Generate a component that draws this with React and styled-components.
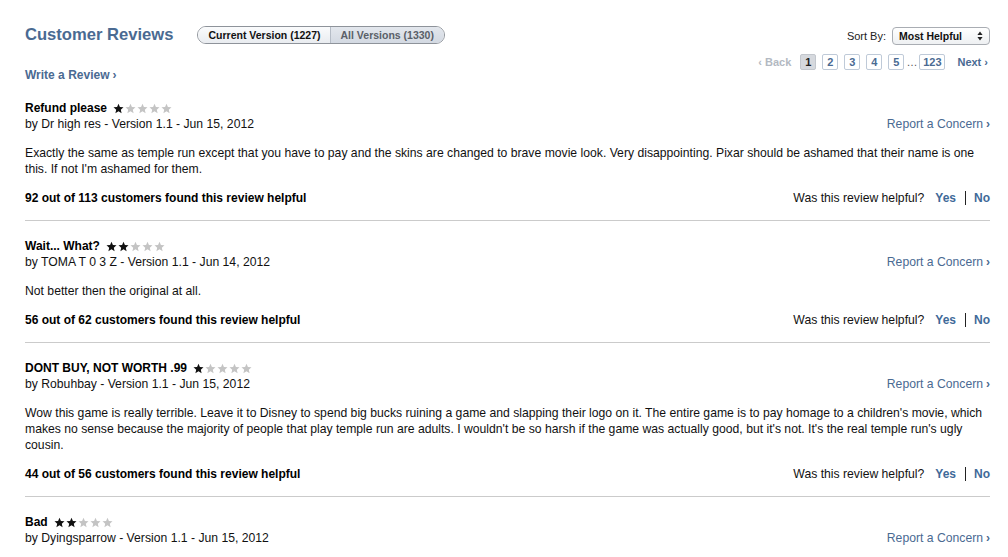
import React from "react";
import styled, { createGlobalStyle } from "styled-components";

const Global = createGlobalStyle`
  html, body { margin: 0; padding: 0; background: #fff; }
  body { font-family: "Liberation Sans", Arial, Helvetica, sans-serif; color: #000; font-size: 12px; }
`;

const Page = styled.div`
  padding: 24px 18px 0 25px;
  width: 965px;
`;

const Header = styled.div`
  display: flex;
  justify-content: space-between;
  align-items: flex-start;
`;

const LeftCol = styled.div`
  display: flex;
  flex-direction: column;
`;

const TitleRow = styled.div`
  display: flex;
  align-items: center;
  gap: 24px;
`;

const Title = styled.h1`
  margin: 0;
  font-size: 16.6px;
  line-height: 22px;
  font-weight: bold;
  color: #4a6a92;
`;

const Toggle = styled.div`
  display: flex;
  height: 16px;
  border: 1px solid #8e939a;
  border-radius: 9px;
  overflow: hidden;
`;

const Seg = styled.div`
  display: flex;
  align-items: center;
  padding-left: 10px;
  padding-right: ${(p) => (p.$first ? "9px" : "10px")};
  font-size: 10.5px;
  font-weight: bold;
  color: ${(p) => (p.$active ? "#111" : "#5a5f68")};
  background: ${(p) =>
    p.$active
      ? "linear-gradient(#fafbfc, #e9ecf0)"
      : "linear-gradient(#e3e7ed, #d3d9e2)"};
  border-left: ${(p) => (p.$first ? "none" : "1px solid #b5bcc6")};
  white-space: nowrap;
`;

const WriteLink = styled.a`
  margin-top: 21px;
  font-size: 12px;
  line-height: 16px;
  font-weight: bold;
  color: #4a6a92;
  text-decoration: none;
`;

const Chev = styled.span`
  font-weight: bold;
  font-size: 12px;
  margin-left: 3px;
`;

const RightCol = styled.div`
  display: flex;
  flex-direction: column;
  align-items: flex-end;
  padding-top: 3px;
`;

const SortRow = styled.div`
  display: flex;
  align-items: center;
  gap: 6px;
  font-size: 11px;
  color: #222;
`;

const Select = styled.div`
  width: 96px;
  height: 16px;
  box-sizing: content-box;
  border: 1px solid #a9adb3;
  border-radius: 4px;
  background: linear-gradient(#ffffff, #eef0f2);
  display: flex;
  align-items: center;
  justify-content: space-between;
  font-size: 10.5px;
  font-weight: bold;
  color: #111;
`;

const SelectText = styled.span`
  padding-left: 6px;
`;

const Arrows = styled.svg`
  margin-right: 6px;
`;

const Pager = styled.div`
  margin-top: 9px;
  display: flex;
  align-items: center;
  height: 16px;
  font-size: 11px;
  font-weight: bold;
`;

const PageNav = styled.span`
  color: ${(p) => (p.$disabled ? "#b3b9c2" : "#4a6a92")};
  margin: ${(p) => (p.$next ? "0 2px 0 12px" : "0 9px 0 0")};
`;

const PageBox = styled.span`
  display: inline-flex;
  align-items: center;
  justify-content: center;
  min-width: ${(p) => (p.$wide ? "24px" : "14px")};
  height: 14px;
  border: 1px solid ${(p) => (p.$active ? "#c3c7cd" : "#bfcad8")};
  border-radius: 2px;
  background: ${(p) => (p.$active ? "#d6d9de" : "#fff")};
  color: ${(p) => (p.$active ? "#222" : "#4a6a92")};
  margin-right: ${(p) => (p.$tight ? "0" : "6px")};
  font-size: 11px;
  line-height: 14px;
`;

const Ellipsis = styled.span`
  color: #555;
  font-weight: normal;
  margin: 0 2px 0 -1px;
`;

const ReviewList = styled.div``;

const ReviewItem = styled.div`
  padding: 17px 0 13px;
  border-bottom: 1px solid #cbcbcb;
`;

const ReviewTitle = styled.div`
  display: flex;
  align-items: center;
  gap: 6px;
  font-size: 12px;
  line-height: 16px;
  font-weight: bold;
`;

const Stars = styled.span`
  display: inline-flex;
  gap: 1px;
`;

const MetaRow = styled.div`
  display: flex;
  justify-content: space-between;
  align-items: center;
  font-size: 12.2px;
  line-height: 16px;
  color: #111;
`;

const Report = styled.a`
  color: #4a6a92;
  text-decoration: none;
`;

const Body = styled.p`
  margin: 13px 0 0;
  font-size: 12.2px;
  line-height: 16px;
  color: #111;
`;

const HelpRow = styled.div`
  margin-top: 12px;
  display: flex;
  justify-content: space-between;
  align-items: center;
  line-height: 18px;
  font-size: 12px;
`;

const HelpCount = styled.span`
  font-weight: bold;
`;

const Vote = styled.div`
  display: flex;
  align-items: center;
  color: #111;
  font-size: 12.2px;
`;

const VoteLink = styled.a`
  font-weight: bold;
  font-size: 12px;
  color: #3f6a99;
  text-decoration: none;
  margin-left: ${(p) => (p.$first ? "11px" : "0")};
`;

const VoteSep = styled.span`
  width: 1px;
  height: 14px;
  background: #222;
  margin: 0 8px 0 9px;
`;

const Star = ({ filled }) => (
  <svg width="11" height="11" viewBox="0 0 24 24">
    <path
      d="M12 1.5l3.1 7.2 7.8.7-5.9 5.1 1.8 7.6L12 18l-6.8 4.1 1.8-7.6-5.9-5.1 7.8-.7z"
      fill={filled ? "#111" : "#c4c4c4"}
    />
  </svg>
);

const Rating = ({ value }) => (
  <Stars>
    {[0, 1, 2, 3, 4].map((i) => (
      <Star key={i} filled={i < value} />
    ))}
  </Stars>
);

const reviews = [
  {
    title: "Refund please",
    rating: 1,
    meta: "by Dr high res - Version 1.1 - Jun 15, 2012",
    body:
      "Exactly the same as temple run except that you have to pay and the skins are changed to brave movie look. Very disappointing. Pixar should be ashamed that their name is one this. If not I'm ashamed for them.",
    helpful: "92 out of 113 customers found this review helpful",
  },
  {
    title: "Wait... What?",
    rating: 2,
    meta: "by TOMA T 0 3 Z - Version 1.1 - Jun 14, 2012",
    body: "Not better then the original at all.",
    helpful: "56 out of 62 customers found this review helpful",
  },
  {
    title: "DONT BUY, NOT WORTH .99",
    rating: 1,
    meta: "by Robuhbay - Version 1.1 - Jun 15, 2012",
    body:
      "Wow this game is really terrible. Leave it to Disney to spend big bucks ruining a game and slapping their logo on it. The entire game is to pay homage to a children's movie, which makes no sense because the majority of people that play temple run are adults. I wouldn't be so harsh if the game was actually good, but it's not. It's the real temple run's ugly cousin.",
    helpful: "44 out of 56 customers found this review helpful",
  },
  {
    title: "Bad",
    rating: 2,
    meta: "by Dyingsparrow - Version 1.1 - Jun 15, 2012",
    body: "Not worth the money. Same game as temple run with different graphics.",
    helpful: "40 out of 48 customers found this review helpful",
  },
];

export default function App() {
  return (
    <>
      <Global />
      <Page>
        <Header>
          <LeftCol>
            <TitleRow>
              <Title>Customer Reviews</Title>
              <Toggle>
                <Seg $first $active>Current Version (1227)</Seg>
                <Seg>All Versions (1330)</Seg>
              </Toggle>
            </TitleRow>
            <WriteLink href="#">
              Write a Review<Chev>›</Chev>
            </WriteLink>
          </LeftCol>
          <RightCol>
            <SortRow>
              <span>Sort By:</span>
              <Select>
                <SelectText>Most Helpful</SelectText>
                <Arrows width="6" height="10" viewBox="0 0 6 10">
                  <path d="M3 0.5L5.6 4H0.4z M3 9.5L0.4 6h5.2z" fill="#222" />
                </Arrows>
              </Select>
            </SortRow>
            <Pager>
              <PageNav $disabled>‹ Back</PageNav>
              <PageBox $active>1</PageBox>
              <PageBox>2</PageBox>
              <PageBox>3</PageBox>
              <PageBox>4</PageBox>
              <PageBox $tight>5</PageBox>
              <Ellipsis>&nbsp;…</Ellipsis>
              <PageBox $wide $tight>123</PageBox>
              <PageNav $next>Next ›</PageNav>
            </Pager>
          </RightCol>
        </Header>
        <ReviewList>
          {reviews.map((r) => (
            <ReviewItem key={r.title}>
              <ReviewTitle>
                <span>{r.title}</span>
                <Rating value={r.rating} />
              </ReviewTitle>
              <MetaRow>
                <span>{r.meta}</span>
                <Report href="#">
                  Report a Concern<Chev>›</Chev>
                </Report>
              </MetaRow>
              <Body>{r.body}</Body>
              <HelpRow>
                <HelpCount>{r.helpful}</HelpCount>
                <Vote>
                  <span>Was this review helpful?</span>
                  <VoteLink $first href="#">Yes</VoteLink>
                  <VoteSep />
                  <VoteLink href="#">No</VoteLink>
                </Vote>
              </HelpRow>
            </ReviewItem>
          ))}
        </ReviewList>
      </Page>
    </>
  );
}
